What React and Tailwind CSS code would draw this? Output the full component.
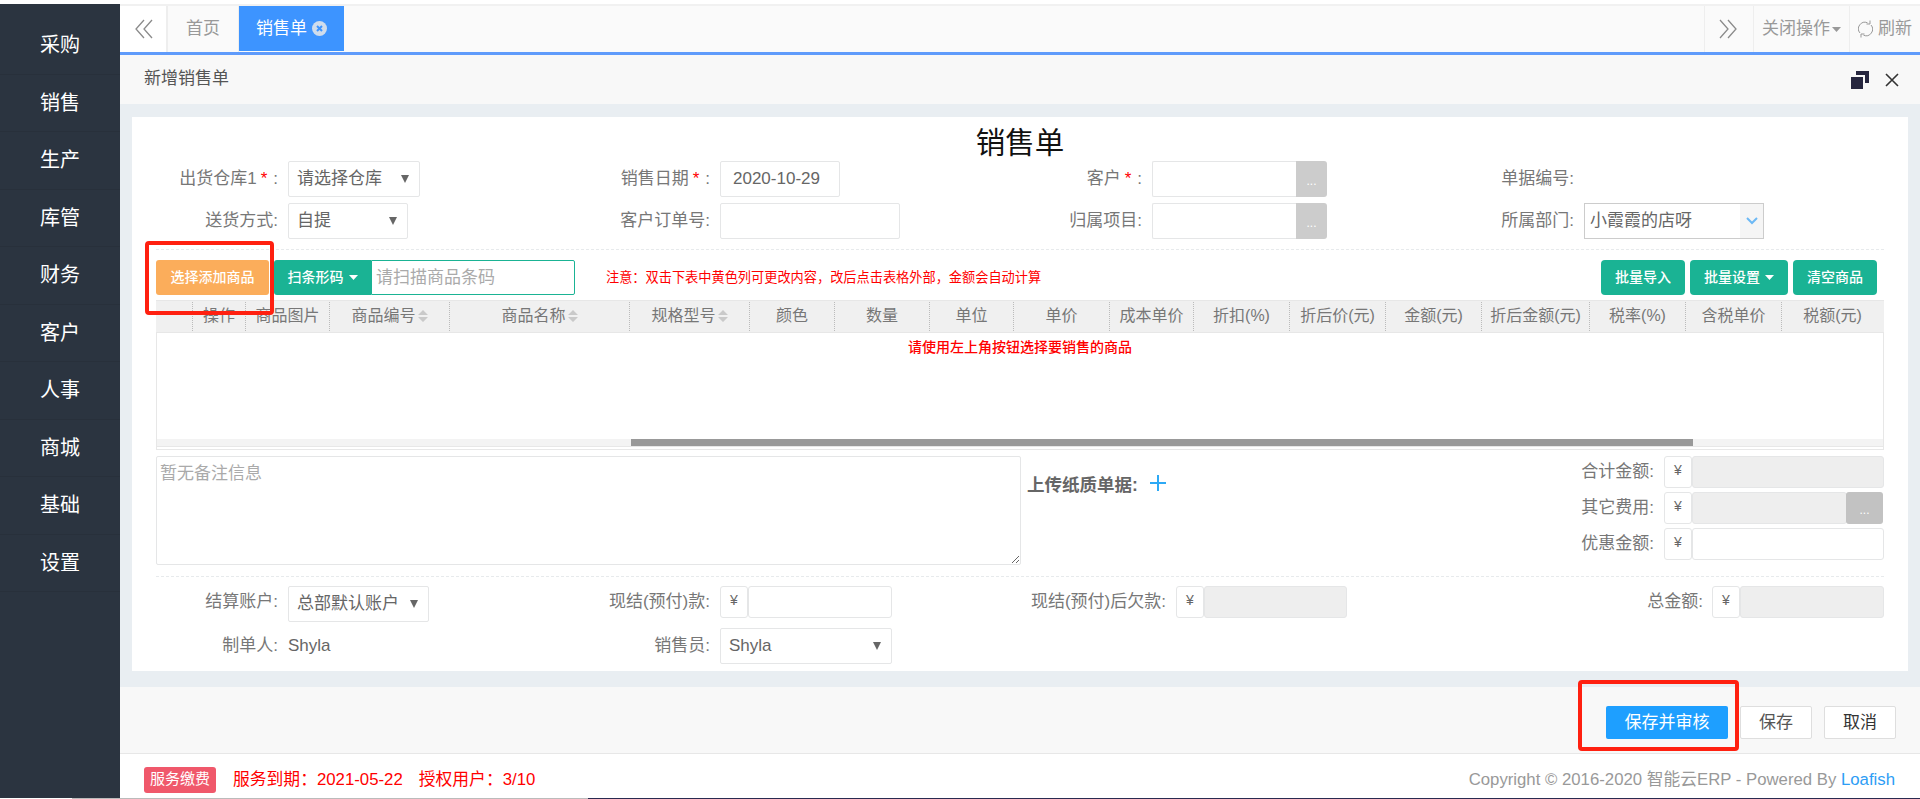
import React from "react";

const menus = ["采购", "销售", "生产", "库管", "财务", "客户", "人事", "商城", "基础", "设置"];

const columnas = [
  ["", 37],
  ["操作", 53],
  ["商品图片", 84],
  ["商品编号", 120, true],
  ["商品名称", 180, true],
  ["规格型号", 120, true],
  ["颜色", 85],
  ["数量", 95],
  ["单位", 84],
  ["单价", 96],
  ["成本单价", 84],
  ["折扣(%)", 96],
  ["折后价(元)", 96],
  ["金额(元)", 96],
  ["折后金额(元)", 108],
  ["税率(%)", 96],
  ["含税单价", 96],
  ["税额(元)", 101],
];

const Dobles = ({ dir }) => (
  <svg width="18" height="20" viewBox="0 0 18 20" fill="none" stroke="#8a8a8a" strokeWidth="1.3">
    {dir === "left" ? (
      <>
        <path d="M9 1 L1 10 L9 19" />
        <path d="M17 1 L9 10 L17 19" />
      </>
    ) : (
      <>
        <path d="M1 1 L9 10 L1 19" />
        <path d="M9 1 L17 10 L9 19" />
      </>
    )}
  </svg>
);

const Triangulo = ({ className = "" }) => (
  <svg width="8" height="8" viewBox="0 0 8 8" className={className}>
    <path d="M0 0 H8 L4 8 Z" fill="#666" />
  </svg>
);

const Caret = () => (
  <svg width="9" height="5" viewBox="0 0 9 5" className="ml-[5px]">
    <path d="M0 0 H9 L4.5 5 Z" fill="#fff" />
  </svg>
);

const Orden = () => (
  <svg width="10" height="14" viewBox="0 0 10 14" className="ml-[2px] shrink-0">
    <path d="M5 1 L10 6 H0 Z M5 13 L0 8 H10 Z" fill="#c9c9c9" />
  </svg>
);

const Etiqueta = ({ children, requerido }) => (
  <div className="w-[122px] mr-[10px] shrink-0 text-right text-[17px] text-[#777] whitespace-nowrap">
    {children}
    {requerido && (
      <>
        <span className="text-[#ff0000] mx-[4px]">*</span>
        <span className="ml-[2px]">:</span>
      </>
    )}
  </div>
);

const Selector = ({ texto, ancho, alto = "h-9" }) => (
  <div className={`${ancho} ${alto} flex items-center justify-between pl-[8px] pr-[10px] bg-white border border-[#e5e6e7] rounded-[2px] text-[17px] text-[#666] whitespace-nowrap`}>
    <span>{texto}</span>
    <Triangulo />
  </div>
);

const Entrada = ({ ancho, valor }) => (
  <div className={`${ancho} h-9 flex items-center px-[12px] bg-white border border-[#e5e6e7] rounded-[2px] text-[17px] text-[#666]`}>
    {valor}
  </div>
);

const EntradaBoton = () => (
  <div className="w-[175px] h-9 flex">
    <div className="flex-1 bg-white border border-r-0 border-[#e5e6e7] rounded-l-[2px]" />
    <div className="w-[31px] bg-[#cccccc] rounded-r-[3px] flex items-center justify-center text-white text-[12px] pt-[4px]">...</div>
  </div>
);

const Moneda = ({ ancho, gris, boton }) => (
  <div className="flex h-8">
    <div className="w-[28px] flex justify-center pt-[3px] bg-white border border-[#e5e6e7] rounded-[3px] text-[14px] text-[#666]">¥</div>
    <div className={`${ancho} ${gris ? "bg-[#eeeeee]" : "bg-white"} border border-[#e5e6e7] rounded-[3px]`} />
    {boton && (
      <div className="w-[37px] -ml-[1px] bg-[#c2c2c2] rounded-[3px] flex items-center justify-center text-white text-[12px] pt-[3px]">...</div>
    )}
  </div>
);

const BotonVerde = ({ children, ancho }) => (
  <div className={`${ancho} h-[35px] flex items-center justify-center bg-[#1ab394] rounded-[4px] text-white text-[14px] font-medium`}>
    {children}
  </div>
);

const App = () => {
  return (
    <div className="relative w-[1920px] h-[799px] flex flex-col overflow-hidden bg-white font-['Liberation_Sans','Noto_Sans_CJK_SC',sans-serif]">
      <div className="flex flex-1 mt-[4px] min-h-0">
        {/* menu lateral */}
        <div className="w-[120px] shrink-0 bg-[#2b3440] pt-[13px]">
          {menus.map((m) => (
            <div key={m} className="h-[57.5px] flex items-center justify-center text-white text-[20px] border-b border-[#28303b]">
              {m}
            </div>
          ))}
        </div>

        <div className="flex-1 min-w-0 flex flex-col">
          {/* pestañas */}
          <div className="h-[2px] bg-[#f1f1f1]" />
          <div className="h-[46px] flex bg-[#fafafa]">
            <div className="w-[48px] pl-[2px] flex items-center justify-center bg-white border-r-2 border-[#eeeeee]">
              <Dobles dir="left" />
            </div>
            <div className="w-[71px] flex items-center justify-center text-[17px] text-[#999] border-r border-[#eeeeee]">首页</div>
            <div className="w-[105px] h-[45px] flex items-center justify-center gap-[5px] bg-[#3d94ff] text-white text-[17px]">
              销售单
              <svg width="15" height="15" viewBox="0 0 15 15">
                <circle cx="7.5" cy="7.5" r="7.5" fill="#cfdcec" />
                <path d="M5 5 L10 10 M10 5 L5 10" stroke="#3d94ff" strokeWidth="2" />
              </svg>
            </div>
            <div className="flex-1" />
            <div className="w-[49px] pr-[2px] flex items-center justify-center border-l border-[#eeeeee]">
              <Dobles dir="right" />
            </div>
            <div className="w-[96px] flex items-center justify-center gap-[2px] text-[17px] text-[#999] border-l border-[#eeeeee] whitespace-nowrap">
              关闭操作
              <svg width="9" height="5" viewBox="0 0 9 5"><path d="M0 0 H9 L4.5 5 Z" fill="#999" /></svg>
            </div>
            <div className="w-[71px] flex items-center justify-center gap-[5px] text-[17px] text-[#999] border-l border-[#eeeeee] whitespace-nowrap">
              <svg width="15" height="18" viewBox="0 0 15 18" fill="none" stroke="#999" strokeWidth="1">
                <path d="M2 13 A6.5 6.5 0 0 1 9.5 2.8" />
                <path d="M13 5 A6.5 6.5 0 0 1 5.5 15.2" />
                <path d="M12 0.5 V4 H8.5 M3 17.5 V14 H6.5" />
              </svg>
              刷新
            </div>
          </div>
          <div className="h-[3px] bg-[#5f9bfb]" />

          {/* titulo de la ventana */}
          <div className="h-[49px] flex items-center justify-between bg-[#f8f8f8] pl-[24px] pr-[21px]">
            <span className="text-[17px] text-[#555] -mt-[2px]">新增销售单</span>
            <div className="flex items-center gap-[16px]">
              <svg width="18" height="18" viewBox="0 0 18 18">
                <path d="M0 6 H12 V18 H0 Z" fill="#26263f" />
                <path d="M5 0 H18 V12 H14 V4 H5 Z" fill="#26263f" />
              </svg>
              <svg width="14" height="14" viewBox="0 0 14 14" stroke="#333" strokeWidth="1.6">
                <path d="M1 1 L13 13 M13 1 L1 13" />
              </svg>
            </div>
          </div>

          {/* formulario */}
          <div className="flex-1 min-h-0 bg-[#e9eef2] px-[12px] pt-[13px]">
            <div className="h-[554px] bg-white px-[24px]">
              <div className="h-[44px] pt-[7px] flex items-center justify-center text-[29.5px] leading-none text-[#111]">销售单</div>

              <div className="grid grid-cols-4 gap-y-[6px]">
                <div className="flex items-center">
                  <Etiqueta requerido>出货仓库1</Etiqueta>
                  <Selector texto="请选择仓库" ancho="w-[132px]" />
                </div>
                <div className="flex items-center">
                  <Etiqueta requerido>销售日期</Etiqueta>
                  <Entrada ancho="w-[120px]" valor="2020-10-29" />
                </div>
                <div className="flex items-center">
                  <Etiqueta requerido>客户</Etiqueta>
                  <EntradaBoton />
                </div>
                <div className="flex items-center">
                  <Etiqueta>单据编号:</Etiqueta>
                </div>
                <div className="flex items-center">
                  <Etiqueta>送货方式:</Etiqueta>
                  <Selector texto="自提" ancho="w-[120px]" />
                </div>
                <div className="flex items-center">
                  <Etiqueta>客户订单号:</Etiqueta>
                  <Entrada ancho="w-[180px]" />
                </div>
                <div className="flex items-center">
                  <Etiqueta>归属项目:</Etiqueta>
                  <EntradaBoton />
                </div>
                <div className="flex items-center">
                  <Etiqueta>所属部门:</Etiqueta>
                  <div className="w-[180px] h-9 flex items-center justify-between pl-[5px] border border-[#cccccc] text-[17px] text-[#666]">
                    小霞霞的店呀
                    <div className="w-[23px] h-[34px] flex items-center justify-center bg-[#f5f5f5]">
                      <svg width="12" height="8" viewBox="0 0 12 8" fill="none" stroke="#6db9f5" strokeWidth="2">
                        <path d="M1 1 L6 6 L11 1" />
                      </svg>
                    </div>
                  </div>
                </div>
              </div>

              <div className="mt-[10px] border-t border-dashed border-[#e7eaec]" />

              {/* barra de herramientas */}
              <div className="mt-[10px] flex items-center h-[35px]">
                <div className="w-[113px] h-[35px] flex items-center justify-center bg-[#fbad5b] rounded-[3px] text-white text-[14px] font-medium">选择添加商品</div>
                <div className="w-[97px] h-[35px] ml-[5px] flex items-center justify-center bg-[#1ab394] rounded-l-[3px] text-white text-[14px] font-medium">
                  扫条形码
                  <Caret />
                </div>
                <input
                  readOnly
                  placeholder="请扫描商品条码"
                  className="w-[204px] h-[35px] px-[4px] border border-[#1ab394] rounded-r-[2px] text-[17px] placeholder:text-[#aaa] outline-none"
                />
                <div className="ml-[31px] text-[13.2px] text-[#ff0000] whitespace-nowrap">
                  注意：双击下表中黄色列可更改内容，改后点击表格外部，金额会自动计算
                </div>
                <div className="ml-auto mr-[7px] flex gap-[5px]">
                  <BotonVerde ancho="w-[84px]">批量导入</BotonVerde>
                  <BotonVerde ancho="w-[98px]">
                    批量设置
                    <Caret />
                  </BotonVerde>
                  <BotonVerde ancho="w-[84px]">清空商品</BotonVerde>
                </div>
              </div>

              {/* tabla */}
              <div className="mt-[5px] h-[150px] border-x border-b border-[#e7e7e7] pb-[2px]">
                <div className="h-[147px] border-b border-[#e7e7e7] flex flex-col">
                  <div className="h-[33px] flex bg-[#f0f0f0] border-y border-[#e7e7e7] -mx-px">
                    {columnas.map(([nombre, ancho, orden], i) => (
                      <div
                        key={nombre || i}
                        style={{ width: ancho }}
                        className="shrink-0 my-[1px] pb-[2px] flex items-center justify-center text-[16px] text-[#777] whitespace-nowrap overflow-hidden border-r border-dotted border-[#bbbbbb] last:border-r-0"
                      >
                        {nombre}
                        {orden && <Orden />}
                      </div>
                    ))}
                  </div>
                  <div className="flex-1 pt-[4px] text-center text-[14px] font-medium text-[#ff0000]">请使用左上角按钮选择要销售的商品</div>
                  <div className="h-[7px] flex bg-[#f3f3f3]">
                    <div className="w-[474px]" />
                    <div className="w-[1062px] bg-[#999999]" />
                  </div>
                </div>
              </div>

              {/* observaciones y totales */}
              <div className="mt-[6px] flex">
                <textarea
                  readOnly
                  placeholder="暂无备注信息"
                  className="block w-[865px] h-[109px] px-[3px] py-[4px] border border-[#e5e6e7] rounded-[2px] text-[17px] placeholder:text-[#aaa] outline-none"
                />
                <div className="ml-[6px] pt-[16px] flex items-start">
                  <span className="text-[17.5px] font-bold text-[#666] whitespace-nowrap">上传纸质单据:</span>
                  <svg width="16" height="16" viewBox="0 0 16 16" className="ml-[12px] mt-[3px]" stroke="#2da9f5" strokeWidth="2">
                    <path d="M8 0 V16 M0 8 H16" />
                  </svg>
                </div>
                <div className="ml-auto flex flex-col gap-[4px]">
                  {[
                    ["合计金额:", true, false],
                    ["其它费用:", true, true],
                    ["优惠金额:", false, false],
                  ].map(([texto, gris, boton]) => (
                    <div key={texto} className="flex items-center">
                      <div className="mr-[10px] text-[17px] text-[#777]">{texto}</div>
                      <Moneda ancho={boton ? "w-[155px]" : "w-[192px]"} gris={gris} boton={boton} />
                    </div>
                  ))}
                </div>
              </div>

              <div className="mt-[11px] border-t border-dashed border-[#e7eaec]" />

              <div className="mt-[9px] grid grid-cols-4 gap-y-[6px]">
                <div className="flex items-start">
                  <div className="h-8 leading-8"><Etiqueta>结算账户:</Etiqueta></div>
                  <Selector texto="总部默认账户" ancho="w-[141px]" />
                </div>
                <div className="flex items-start">
                  <div className="h-8 leading-8"><Etiqueta>现结(预付)款:</Etiqueta></div>
                  <Moneda ancho="w-[144px]" />
                </div>
                <div className="flex items-start">
                  <div className="w-[146px] mr-[10px] h-8 leading-8 text-right text-[17px] text-[#777] whitespace-nowrap">现结(预付)后欠款:</div>
                  <Moneda ancho="w-[143px]" gris />
                </div>
                <div className="flex items-start justify-end">
                  <div className="h-8 leading-8 mr-[9px] text-[17px] text-[#777]">总金额:</div>
                  <Moneda ancho="w-[144px]" gris />
                </div>
                <div className="flex items-center">
                  <Etiqueta>制单人:</Etiqueta>
                  <span className="text-[17px] text-[#666]">Shyla</span>
                </div>
                <div className="flex items-center">
                  <Etiqueta>销售员:</Etiqueta>
                  <Selector texto="Shyla" ancho="w-[172px]" />
                </div>
              </div>
            </div>
          </div>

          {/* acciones */}
          <div className="h-[67px] flex items-start justify-end gap-[12px] pt-[19px] pr-[24px] bg-[#f8f8f8] border-b border-[#e7e7e7]">
            <div className="w-[122px] h-[33px] flex items-center justify-center bg-[#1e9fff] rounded-[2px] text-white text-[17px]">保存并审核</div>
            <div className="w-[72px] h-[33px] flex items-center justify-center bg-white border border-[#dedede] rounded-[2px] text-[17px] text-[#555]">保存</div>
            <div className="w-[72px] h-[33px] flex items-center justify-center bg-white border border-[#dedede] rounded-[2px] text-[17px] text-[#333]">取消</div>
          </div>

          {/* pie */}
          <div className="h-[44px] flex items-center justify-between pt-[7px] pl-[24px] pr-[25px] bg-white">
            <div className="flex items-center">
              <div className="w-[72px] h-[26px] flex items-center justify-center bg-[#f0586b] rounded-[3px] text-white text-[15px]">服务缴费</div>
              <span className="ml-[17px] text-[16.8px] text-[#ff0000] whitespace-nowrap">服务到期：2021-05-22</span>
              <span className="ml-[16px] text-[16.8px] text-[#ff0000] whitespace-nowrap">授权用户：3/10</span>
            </div>
            <div className="text-[16.75px] text-[#999] whitespace-nowrap">
              Copyright © 2016-2020 智能云ERP - Powered By <span className="text-[#2d9df5]">Loafish</span>
            </div>
          </div>
        </div>
      </div>

      <div className="h-px flex shrink-0">
        <div className="w-[72px] bg-white" />
        <div className="w-[516px] bg-[#bbbbbb]" />
        <div className="flex-1 bg-[#2a2a50]" />
      </div>

      {/* recuadros rojos de anotacion */}
      <div className="absolute left-[145px] top-[241px] w-[129px] h-[74px] border-[4.5px] border-[#ff2010] rounded-[4px]" />
      <div className="absolute left-[1578px] top-[680px] w-[161px] h-[71px] border-[4.5px] border-[#ff2010] rounded-[4px]" />
    </div>
  );
};

export default App;
